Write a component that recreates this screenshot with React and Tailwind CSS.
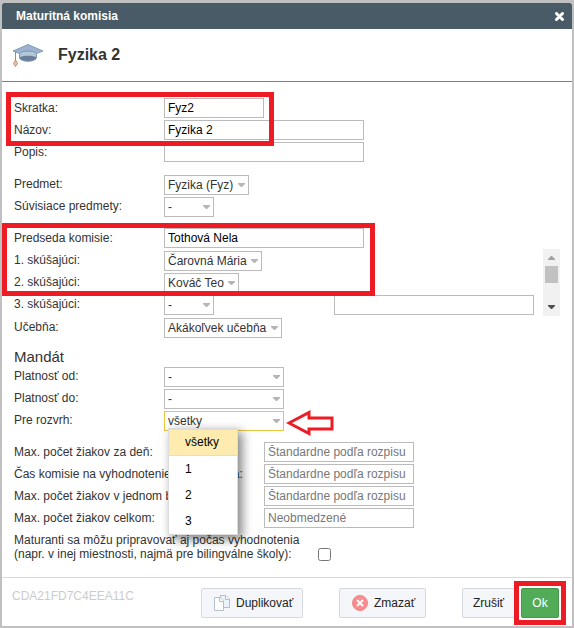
const inputClass = 'h-5 border border-[#bbb] bg-white px-[3px] text-xs text-black outline-none placeholder:text-[#777]'

function TextInput({ className = 'w-50', ...props }) {
  return <input type="text" className={`${inputClass} ${className}`} {...props} />
}

function Select({ id, options, width, active = false, children }) {
  return (
    <div className={`relative ${width}`}>
      <select
        id={id}
        className={`block h-5 w-full appearance-none border bg-white pl-[3px] text-xs outline-none ${active ? 'border-[#ecc440]' : 'border-[#bbb]'}`}
      >
        {options.map((option) => (
          <option key={option}>{option}</option>
        ))}
      </select>
      <svg className="pointer-events-none absolute top-2 right-1 h-[5px] w-[7px] fill-[#b5b5b5]" viewBox="0 0 7 5">
        <path d="M0 0H7V1L4 4H3L0 1Z" />
      </svg>
      {children}
    </div>
  )
}

function Row({ id, label, children, labelClass = 'w-[150px] leading-5' }) {
  return (
    <div className="flex h-5 items-start">
      <label htmlFor={id} className={`shrink-0 whitespace-nowrap ${labelClass}`}>
        {label}
      </label>
      {children}
    </div>
  )
}

function SelectRow(props) {
  return <Row labelClass="w-[150px] leading-[18px]" {...props} />
}

function Frame({ className }) {
  return <div className={`pointer-events-none absolute z-20 border-5 border-[#ed1c24] ${className}`} />
}

function CapIcon() {
  return (
    <svg className="h-6 w-8" viewBox="0 0 32 24">
      <path d="M7.500 8V14.500C8 19.500 24 19.500 24.500 14.500V8Z" fill="#b4c6da" stroke="#7f97b0" />
      <path d="M7.500 14.500C10 12 22 12 24.500 14.500C24 19 8 19 7.500 14.500Z" fill="#687f97" />
      <path d="M1 8L16 1.500L31 8L24.500 10.500C21 7 11 7 7.500 10.500Z" fill="#9bb3ce" stroke="#829cb9" />
      <path d="M3.500 8.500V18" stroke="#b98260" fill="none" />
      <path d="M3.500 17L5.500 20.500L3.500 23.500L1.500 20.500Z" fill="#f6bf9e" stroke="#cb8c68" />
    </svg>
  )
}

function CopyIcon() {
  return (
    <svg className="h-4 w-4" viewBox="0 0 16 16" fill="#fff" stroke="#b3bfcc" strokeLinejoin="round">
      <path d="M6.500 .5H12L15.500 4V12.500H6.500Z" fill="#eaf3f9" />
      <path d="M11.500 .5V4.500H15.500" />
      <path d="M.5 2.500H6L9.500 6V15.500H.5Z" />
      <path d="M5.500 2.500V6.500H9.500" />
    </svg>
  )
}

function DeleteIcon() {
  return (
    <svg className="h-4 w-4" viewBox="0 0 16 16">
      <circle cx="8" cy="8" r="7.500" fill="#f98d8d" stroke="#f08686" />
      <path d="M5 5L11 11M11 5L5 11" stroke="#fff" strokeWidth="2" />
    </svg>
  )
}

function Button({ children, className = '' }) {
  return (
    <button
      type="button"
      className={`flex h-[30px] items-center rounded-xs border border-[#d5d9de] bg-[#f4f6fa] text-[#222] ${className}`}
    >
      {children}
    </button>
  )
}

function ScrollBar() {
  return (
    <div className="mr-3 ml-auto flex h-[67px] w-[17px] flex-col items-center bg-[#f1f1f1] py-[7px]">
      <svg className="h-1 w-[7px] shrink-0 fill-[#a3a3a3]" viewBox="0 0 7 4">
        <path d="M3 0H4L7 3V4H0V3Z" />
      </svg>
      <div className="mt-[6px] h-[17px] w-[13px] bg-[#c1c1c1]" />
      <svg className="mt-auto h-1 w-[7px] shrink-0 fill-[#505050]" viewBox="0 0 7 4">
        <path d="M0 0H7V1L4 4H3L0 1Z" />
      </svg>
    </div>
  )
}

const limits = [
  ['perDay', 'Max. počet žiakov za deň:', 'Štandardne podľa rozpisu'],
  ['time', 'Čas komisie na vyhodnotenie koncom dňa:', 'Štandardne podľa rozpisu'],
  ['perBlock', 'Max. počet žiakov v jednom bloku:', 'Štandardne podľa rozpisu'],
  ['total', 'Max. počet žiakov celkom:', 'Neobmedzené'],
]

export default function App() {
  return (
    <div className="border-2 border-t-3 border-[#c0c0c0] bg-white font-['Liberation_Sans',Arial,sans-serif] text-xs text-[#333]">
      {/* Title bar */}
      <div className="flex h-[26px] items-center justify-between rounded-t-xs bg-[#485b66] pr-2 pl-[14px] font-bold text-white">
        <span>Maturitná komisia</span>
        <button type="button" aria-label="Zavrieť">
          <svg className="h-[9px] w-[9px]" viewBox="0 0 9 9" stroke="#fff" strokeWidth="3" strokeLinecap="round">
            <path d="M1.500 1.500L7.500 7.500M7.500 1.500L1.500 7.500" />
          </svg>
        </button>
      </div>

      <header className="flex h-[53px] items-center gap-[14px] border-b border-[#808080] pl-[10px]">
        <CapIcon />
        <h1 className="text-base font-bold">Fyzika 2</h1>
      </header>

      <form className="relative pt-4 pl-3">
        <Frame className="top-[10px] left-1 h-[54px] w-[268px]" />
        <Frame className="top-[141px] left-0 h-[73px] w-[373px]" />

        <div className="flex flex-col gap-[2px]">
          <Row id="short" label="Skratka:">
            <TextInput id="short" defaultValue="Fyz2" className="w-25" />
          </Row>
          <Row id="name" label="Názov:">
            <TextInput id="name" defaultValue="Fyzika 2" />
          </Row>
          <Row id="desc" label="Popis:">
            <TextInput id="desc" />
          </Row>
        </div>

        <div className="mt-[13px] flex flex-col gap-[2px]">
          <SelectRow id="subject" label="Predmet:">
            <Select id="subject" options={['Fyzika (Fyz)']} width="w-[85px]" />
          </SelectRow>
          <SelectRow id="related" label="Súvisiace predmety:">
            <Select id="related" options={['-']} width="w-[50px]" />
          </SelectRow>
        </div>

        <div className="mt-[11px]">
          <Row id="chair" label="Predseda komisie:">
            <TextInput id="chair" defaultValue="Tothová Nela" />
          </Row>
        </div>

        {/* Examiners */}
        <div className="mt-px flex">
          <div className="flex flex-col gap-[2px] pt-[2px]">
            <SelectRow id="ex1" label="1. skúšajúci:">
              <Select id="ex1" options={['Čarovná Mária']} width="w-[98px]" />
            </SelectRow>
            <SelectRow id="ex2" label="2. skúšajúci:">
              <Select id="ex2" options={['Kováč Teo']} width="w-[75px]" />
            </SelectRow>
            <SelectRow id="ex3" label="3. skúšajúci:">
              <div className="w-[170px]">
                <Select id="ex3" options={['-']} width="w-[50px]" />
              </div>
              <TextInput aria-label="3. skúšajúci, meno" />
            </SelectRow>
          </div>
          <ScrollBar />
        </div>

        <div className="mt-[2px]">
          <SelectRow id="room" label="Učebňa:">
            <Select id="room" options={['Akákoľvek učebňa']} width="w-[118px]" />
          </SelectRow>
        </div>

        <h2 className="mt-[9px] text-[15px] leading-5">Mandát</h2>
        <div className="flex flex-col gap-[2px]">
          <SelectRow id="from" label="Platnosť od:">
            <Select id="from" options={['-']} width="w-[120px]" />
          </SelectRow>
          <SelectRow id="to" label="Platnosť do:">
            <Select id="to" options={['-']} width="w-[120px]" />
          </SelectRow>
          <SelectRow id="timetable" label="Pre rozvrh:">
            <Select id="timetable" options={['všetky', '1', '2', '3']} width="w-[120px]" active>
              <ul className="absolute top-[17px] left-1 z-10 w-[70px] border border-t-2 border-[#ddd] bg-white text-black shadow-[4px_4px_10px_rgba(0,0,0,0.5)]">
                <li className="h-[26px] border-b border-[#ddd] bg-[#fdebb0] pl-4 leading-[25px]">všetky</li>
                <li className="h-[26px] pl-4 leading-[26px]">1</li>
                <li className="h-[26px] pl-4 leading-[26px]">2</li>
                <li className="h-[26px] pl-4 leading-[26px]">3</li>
              </ul>
              <svg
                className="absolute top-[-2px] left-[122px] h-[27px] w-12"
                viewBox="0 0 48 27"
                fill="#fff"
                stroke="#ed1c24"
                strokeWidth="3"
              >
                <path d="M3 14L23 3.500V9H46V20H23V24.500Z" />
              </svg>
            </Select>
          </SelectRow>
        </div>

        <div className="mt-[11px] flex flex-col gap-[2px]">
          {limits.map(([id, label, placeholder]) => (
            <Row key={id} id={id} label={label} labelClass="w-[250px] leading-5">
              <TextInput id={id} placeholder={placeholder} className="w-[150px]" />
            </Row>
          ))}
        </div>

        <div className="mt-[5px] flex items-end pb-4">
          <label htmlFor="prep" className="w-[304px] leading-[14px]">
            Maturanti sa môžu pripravovať aj počas vyhodnotenia
            <br />
            (napr. v inej miestnosti, najmä pre bilingválne školy):
          </label>
          <input id="prep" type="checkbox" className="h-[13px] w-[13px]" />
        </div>
      </form>

      <footer className="flex items-start border-t border-[#d6d9dd] pt-[10px] pr-[13px] pb-2 pl-[10px]">
        <span className="text-[#ccc]">CDA21FD7C4EEA11C</span>
        <Button className="ml-auto w-[102px] gap-[6px] pl-3">
          <CopyIcon />
          Duplikovať
        </Button>
        <Button className="ml-9 w-[87px] gap-[6px] pl-3">
          <DeleteIcon />
          Zmazať
        </Button>
        <Button className="ml-9 w-[53px] justify-center">Zrušiť</Button>
        <div className="relative ml-[6px]">
          <Frame className="inset-[-7px]" />
          <button type="submit" className="h-[30px] w-[38px] rounded-xs border border-[#43984a] bg-[#52ab57] text-white">
            Ok
          </button>
        </div>
      </footer>
    </div>
  )
}
